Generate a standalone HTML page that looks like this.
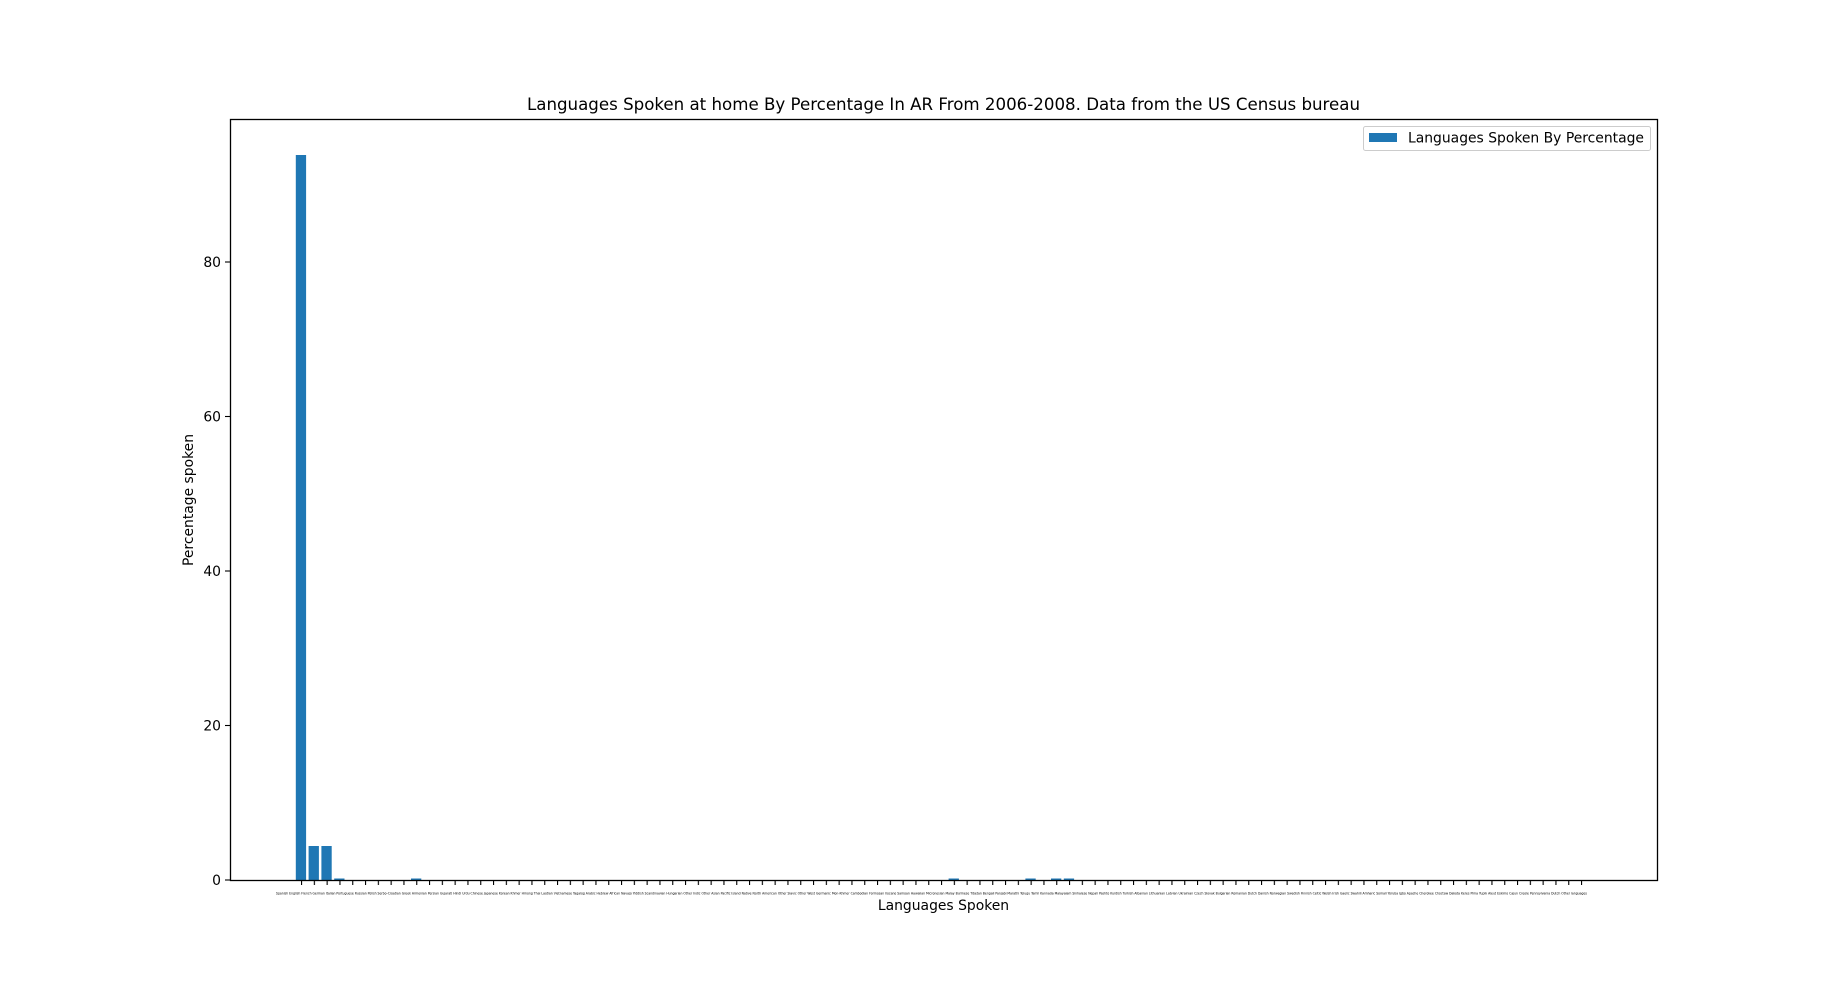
<!DOCTYPE html>
<html><head><meta charset="utf-8"><style>
html,body{margin:0;padding:0;background:#fff;width:1841px;height:989px;overflow:hidden}
svg{display:block}
text{font-family:"DejaVu Sans","Liberation Sans",sans-serif;fill:#000}
</style></head><body>
<svg width="1841" height="989" viewBox="0 0 1841 989">
<defs>
<pattern id="tk" x="301" y="880" width="12.8" height="5" patternUnits="userSpaceOnUse">
<rect x="0" y="0" width="1.1" height="5" fill="#000"/>
</pattern>
</defs>
<text x="943.5" y="110" font-size="16.65" text-anchor="middle">Languages Spoken at home By Percentage In AR From 2006-2008. Data from the US Census bureau</text>
<g fill="#1f77b4">
<rect x="295.8" y="155" width="10.3" height="725"/>
<rect x="308.6" y="846" width="10.3" height="34"/>
<rect x="321.4" y="846" width="10.3" height="34"/>
<rect x="334.2" y="878.5" width="10.3" height="1.5"/>
<rect x="411" y="878.5" width="10.3" height="1.5"/>
<rect x="948.6" y="878.5" width="10.3" height="1.5"/>
<rect x="1025.4" y="878.5" width="10.3" height="1.5"/>
<rect x="1051" y="878.5" width="10.3" height="1.5"/>
<rect x="1063.8" y="878.5" width="10.3" height="1.5"/>
</g>
<rect x="230.5" y="119.5" width="1427" height="761" fill="none" stroke="#000" stroke-width="1.3"/>
<rect x="300.5" y="880" width="1282" height="5" fill="url(#tk)"/>
<text x="276" y="894.5" font-size="3.8" fill="#222" textLength="1311" lengthAdjust="spacingAndGlyphs">Spanish English French German Italian Portuguese Russian Polish Serbo-Croatian Greek Armenian Persian Gujarati Hindi Urdu Chinese Japanese Korean Khmer Hmong Thai Laotian Vietnamese Tagalog Arabic Hebrew African Navajo Yiddish Scandinavian Hungarian Other Indic Other Asian Pacific Island Native North American Other Slavic Other West Germanic Mon-Khmer Cambodian Formosan Ilocano Samoan Hawaiian Micronesian Malay Burmese Tibetan Bengali Panjabi Marathi Telugu Tamil Kannada Malayalam Sinhalese Nepali Pashto Kurdish Turkish Albanian Lithuanian Latvian Ukrainian Czech Slovak Bulgarian Romanian Dutch Danish Norwegian Swedish Finnish Celtic Welsh Irish Gaelic Swahili Amharic Somali Yoruba Igbo Apache Cherokee Choctaw Dakota Keres Pima Yupik Aleut Eskimo Cajun Creole Pennsylvania Dutch Other languages</text>
<g stroke="#000" stroke-width="1.1">
<line x1="225" y1="880" x2="230" y2="880"/>
<line x1="225" y1="725.5" x2="230" y2="725.5"/>
<line x1="225" y1="571" x2="230" y2="571"/>
<line x1="225" y1="416.5" x2="230" y2="416.5"/>
<line x1="225" y1="262" x2="230" y2="262"/>
</g>
<g font-size="13.9" text-anchor="end">
<text x="221" y="885">0</text>
<text x="221" y="730.5">20</text>
<text x="221" y="576">40</text>
<text x="221" y="421.5">60</text>
<text x="221" y="267">80</text>
</g>
<text x="943.5" y="910" font-size="13.9" text-anchor="middle">Languages Spoken</text>
<text transform="translate(193,500) rotate(-90)" font-size="13.9" text-anchor="middle">Percentage spoken</text>
<rect x="1363.5" y="126.5" width="287" height="24" rx="2" fill="#fff" stroke="#ccc" stroke-width="1"/>
<rect x="1369" y="133" width="28" height="9" fill="#1f77b4"/>
<text x="1408" y="142.5" font-size="13.9">Languages Spoken By Percentage</text>
</svg>
</body></html>
